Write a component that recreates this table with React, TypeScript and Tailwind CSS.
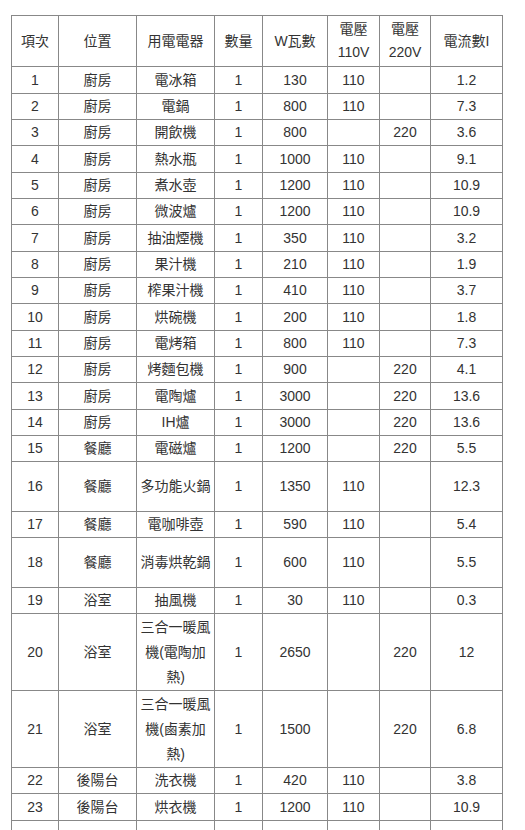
import React from "react";

type Row = {
  no: number;
  place: string;
  item: React.ReactNode;
  qty: string;
  watt: string;
  v110: string;
  v220: string;
  amp: string;
  h: string;
};

const rows: Row[] = [
  { no: 1, place: "廚房", item: "電冰箱", qty: "1", watt: "130", v110: "110", v220: "", amp: "1.2", h: "h-[27px]" },
  { no: 2, place: "廚房", item: "電鍋", qty: "1", watt: "800", v110: "110", v220: "", amp: "7.3", h: "h-[26px]" },
  { no: 3, place: "廚房", item: "開飲機", qty: "1", watt: "800", v110: "", v220: "220", amp: "3.6", h: "h-[26px]" },
  { no: 4, place: "廚房", item: "熱水瓶", qty: "1", watt: "1000", v110: "110", v220: "", amp: "9.1", h: "h-[27px]" },
  { no: 5, place: "廚房", item: "煮水壺", qty: "1", watt: "1200", v110: "110", v220: "", amp: "10.9", h: "h-[26px]" },
  { no: 6, place: "廚房", item: "微波爐", qty: "1", watt: "1200", v110: "110", v220: "", amp: "10.9", h: "h-[26px]" },
  { no: 7, place: "廚房", item: "抽油煙機", qty: "1", watt: "350", v110: "110", v220: "", amp: "3.2", h: "h-[27px]" },
  { no: 8, place: "廚房", item: "果汁機", qty: "1", watt: "210", v110: "110", v220: "", amp: "1.9", h: "h-[26px]" },
  { no: 9, place: "廚房", item: "榨果汁機", qty: "1", watt: "410", v110: "110", v220: "", amp: "3.7", h: "h-[26px]" },
  { no: 10, place: "廚房", item: "烘碗機", qty: "1", watt: "200", v110: "110", v220: "", amp: "1.8", h: "h-[27px]" },
  { no: 11, place: "廚房", item: "電烤箱", qty: "1", watt: "800", v110: "110", v220: "", amp: "7.3", h: "h-[26px]" },
  { no: 12, place: "廚房", item: "烤麵包機", qty: "1", watt: "900", v110: "", v220: "220", amp: "4.1", h: "h-[26px]" },
  { no: 13, place: "廚房", item: "電陶爐", qty: "1", watt: "3000", v110: "", v220: "220", amp: "13.6", h: "h-[27px]" },
  { no: 14, place: "廚房", item: "IH爐", qty: "1", watt: "3000", v110: "", v220: "220", amp: "13.6", h: "h-[26px]" },
  { no: 15, place: "餐廳", item: "電磁爐", qty: "1", watt: "1200", v110: "", v220: "220", amp: "5.5", h: "h-[26px]" },
  { no: 16, place: "餐廳", item: "多功能火鍋", qty: "1", watt: "1350", v110: "110", v220: "", amp: "12.3", h: "h-[50px]" },
  { no: 17, place: "餐廳", item: "電咖啡壺", qty: "1", watt: "590", v110: "110", v220: "", amp: "5.4", h: "h-[26px]" },
  { no: 18, place: "餐廳", item: "消毒烘乾鍋", qty: "1", watt: "600", v110: "110", v220: "", amp: "5.5", h: "h-[50px]" },
  { no: 19, place: "浴室", item: "抽風機", qty: "1", watt: "30", v110: "110", v220: "", amp: "0.3", h: "h-[26px]" },
  {
    no: 20,
    place: "浴室",
    item: (
      <>
        三合一暖風
        <br />
        機(電陶加
        <br />
        熱)
      </>
    ),
    qty: "1",
    watt: "2650",
    v110: "",
    v220: "220",
    amp: "12",
    h: "h-[77px]",
  },
  {
    no: 21,
    place: "浴室",
    item: (
      <>
        三合一暖風
        <br />
        機(鹵素加
        <br />
        熱)
      </>
    ),
    qty: "1",
    watt: "1500",
    v110: "",
    v220: "220",
    amp: "6.8",
    h: "h-[77px]",
  },
  { no: 22, place: "後陽台", item: "洗衣機", qty: "1", watt: "420", v110: "110", v220: "", amp: "3.8", h: "h-[26px]" },
  { no: 23, place: "後陽台", item: "烘衣機", qty: "1", watt: "1200", v110: "110", v220: "", amp: "10.9", h: "h-[27px]" },
];

const cell = "border border-[#888888] p-0 text-center align-middle";

export default function App() {
  return (
    <div
      className="bg-white min-h-[830px] pt-[15px] pl-[11px] text-[14px] text-[#333333]"
      style={{ fontFamily: '"Liberation Sans", "Noto Sans CJK TC", sans-serif' }}
    >
      <table className="table-fixed border-collapse w-[491px]">
        <colgroup>
          <col className="w-[47px]" />
          <col className="w-[78px]" />
          <col className="w-[78px]" />
          <col className="w-[48px]" />
          <col className="w-[65px]" />
          <col className="w-[52px]" />
          <col className="w-[51px]" />
          <col className="w-[72px]" />
        </colgroup>
        <thead>
          <tr className="h-[51px] leading-[23px]">
            <th className={`${cell} font-normal`}>項次</th>
            <th className={`${cell} font-normal`}>位置</th>
            <th className={`${cell} font-normal`}>用電電器</th>
            <th className={`${cell} font-normal`}>數量</th>
            <th className={`${cell} font-normal`}>W瓦數</th>
            <th className={`${cell} font-normal`}>
              電壓
              <br />
              110V
            </th>
            <th className={`${cell} font-normal`}>
              電壓
              <br />
              220V
            </th>
            <th className={`${cell} font-normal`}>電流數I</th>
          </tr>
        </thead>
        <tbody className="leading-[25px]">
          {rows.map((r) => (
            <tr key={r.no} className={r.h}>
              <td className={cell}>{r.no}</td>
              <td className={cell}>{r.place}</td>
              <td className={cell}>{r.item}</td>
              <td className={cell}>{r.qty}</td>
              <td className={cell}>{r.watt}</td>
              <td className={cell}>{r.v110}</td>
              <td className={cell}>{r.v220}</td>
              <td className={cell}>{r.amp}</td>
            </tr>
          ))}
          <tr className="h-[26px]">
            <td className={cell}></td>
            <td className={cell}></td>
            <td className={cell}></td>
            <td className={cell}></td>
            <td className={cell}></td>
            <td className={cell}></td>
            <td className={cell}></td>
            <td className={cell}></td>
          </tr>
        </tbody>
      </table>
    </div>
  );
}
